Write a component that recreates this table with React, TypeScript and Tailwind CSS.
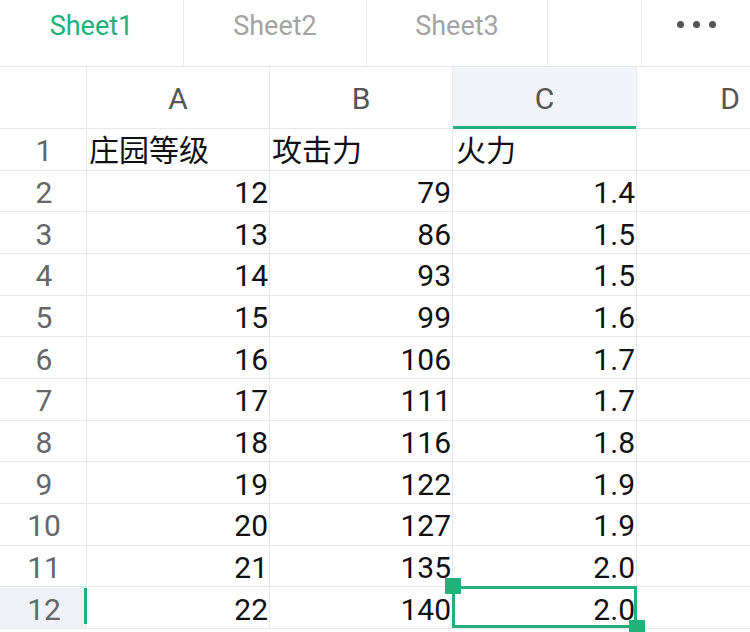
import React from "react";

const rows: [string, string, string, string][] = [
  ["1", "庄园等级", "攻击力", "火力"],
  ["2", "12", "79", "1.4"],
  ["3", "13", "86", "1.5"],
  ["4", "14", "93", "1.5"],
  ["5", "15", "99", "1.6"],
  ["6", "16", "106", "1.7"],
  ["7", "17", "111", "1.7"],
  ["8", "18", "116", "1.8"],
  ["9", "19", "122", "1.9"],
  ["10", "20", "127", "1.9"],
  ["11", "21", "135", "2.0"],
  ["12", "22", "140", "2.0"],
];

const font = { fontFamily: 'Roboto, "Noto Sans CJK SC", sans-serif' };

export default function App() {
  return (
    <div
      className="w-[750px] h-[632px] overflow-hidden bg-white"
      style={font}
    >
      {/* Tab bar */}
      <div className="flex h-[67px] border-b border-[#e6e6e6]">
        <div className="w-[184px] flex items-center justify-center pb-[13px] border-r border-[#ececec] text-[27px] text-[#22b07b]">
          Sheet1
        </div>
        <div className="w-[183px] flex items-center justify-center pb-[13px] border-r border-[#ececec] text-[27px] text-[#a3a3a3]">
          Sheet2
        </div>
        <div className="w-[181px] flex items-center justify-center pb-[13px] border-r border-[#ececec] text-[27px] text-[#a3a3a3]">
          Sheet3
        </div>
        <div className="w-[94px] border-r border-[#ececec]" />
        <div className="flex-1 flex items-center justify-center gap-[9px] pb-[17px]">
          <span className="w-[7px] h-[7px] rounded-full bg-[#555]" />
          <span className="w-[7px] h-[7px] rounded-full bg-[#555]" />
          <span className="w-[7px] h-[7px] rounded-full bg-[#555]" />
        </div>
      </div>

      {/* Grid */}
      <div className="grid grid-cols-[87px_183px_183px_184px_1fr]">
        {/* header row */}
        <div className="h-[62px] border-r border-b border-[#e8e8e8]" />
        <div className="h-[62px] border-r border-b border-[#e8e8e8] flex items-center justify-center pt-[2px] text-[30px] text-[#555]">
          A
        </div>
        <div className="h-[62px] border-r border-b border-[#e8e8e8] flex items-center justify-center pt-[2px] text-[30px] text-[#555]">
          B
        </div>
        <div className="h-[62px] border-r border-[#e8e8e8] bg-[#f3f4fa] flex flex-col">
          <div className="flex-1 flex items-center justify-center text-[30px] text-[#555] pt-[4px]">
            C
          </div>
          <div className="h-[3px] bg-[#22b07b]" />
        </div>
        <div className="h-[62px] border-b border-[#e8e8e8] flex items-center justify-end pr-[10px] pt-[2px] text-[30px] text-[#555]">
          D
        </div>

        {rows.map((r, i) => {
          const last = i === rows.length - 1;
          const isText = i === 0;
          return (
            <React.Fragment key={r[0]}>
              <div
                className={
                  "h-[41.67px] border-r border-b border-[#e8e8e8] flex items-center justify-center pt-[3px] pl-[2px] text-[30px] text-[#666] relative " +
                  (last ? "bg-[#eff1f7]" : "")
                }
              >
                {r[0]}
                {last && (
                  <span className="absolute right-[-1px] top-[1px] bottom-[4px] w-[3px] bg-[#22b07b]" />
                )}
              </div>
              <div
                className={
                  "h-[41.67px] border-r border-b border-[#e8e8e8] flex items-center pt-[3px] text-[30px] text-[#111] whitespace-nowrap " +
                  (isText ? "justify-start pl-[2px]" : "justify-end pr-[1px]")
                }
              >
                {r[1]}
              </div>
              <div
                className={
                  "h-[41.67px] border-r border-b border-[#e8e8e8] flex items-center pt-[3px] text-[30px] text-[#111] whitespace-nowrap " +
                  (isText ? "justify-start pl-[2px]" : "justify-end pr-[1px]")
                }
              >
                {r[2]}
              </div>
              <div
                className={
                  "h-[41.67px] border-r border-b border-[#e8e8e8] flex items-center pt-[3px] text-[30px] text-[#111] whitespace-nowrap relative " +
                  (isText ? "justify-start pl-[3px]" : "justify-end pr-[1px]")
                }
              >
                {r[3]}
                {last && (
                  <>
                    <span className="absolute left-[-1px] top-[-1px] right-[-1px] bottom-[0px] border-[3px] border-[#22b07b]" />
                    <span className="absolute left-[-8px] top-[-9px] w-[16px] h-[16px] bg-[#22b07b]" />
                    <span className="absolute right-[-9px] bottom-[-8px] w-[16px] h-[16px] bg-[#22b07b]" />
                  </>
                )}
              </div>
              <div className="h-[41.67px] border-b border-[#e8e8e8]" />
            </React.Fragment>
          );
        })}
      </div>
    </div>
  );
}
